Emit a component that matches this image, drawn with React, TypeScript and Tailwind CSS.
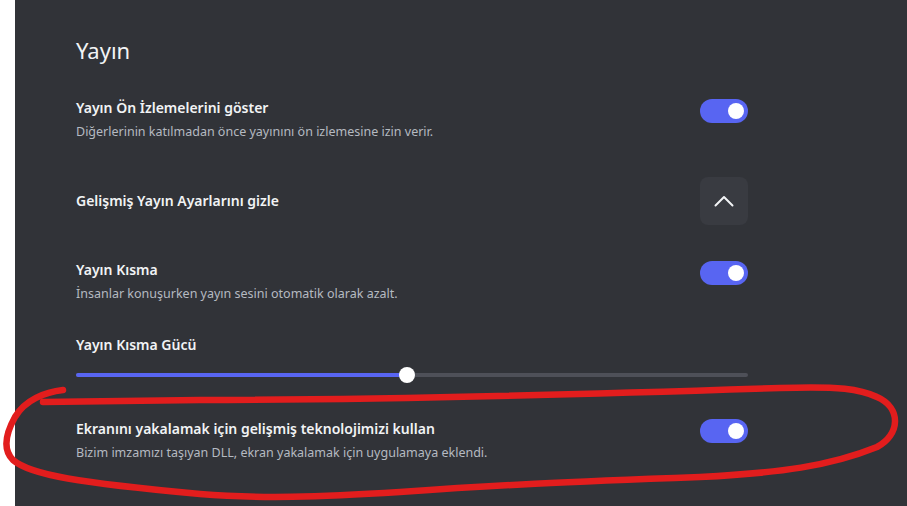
import React from "react";

function Toggle() {
  return (
    <div className="w-[48px] h-[24px] rounded-full bg-[#5865f2] flex items-center justify-end pr-[4px] shrink-0">
      <div className="w-[16px] h-[16px] rounded-full bg-white" />
    </div>
  );
}

export default function App() {
  const font = { fontFamily: '"Noto Sans", sans-serif' };
  return (
    <div className="w-[907px] h-[506px] flex bg-white relative overflow-hidden" style={font}>
      <div className="w-[15px] shrink-0 bg-white" />
      <div className="flex-1 bg-[#313338] pl-[61px] pr-[159px] pt-[36px]">
        <div className="text-[22px] leading-[28px] text-[#f2f3f5]">Yayın</div>

        <div className="mt-[34px] flex justify-between items-start">
          <div>
            <div className="text-[14px] leading-[20px] font-semibold text-[#f2f3f5]">Yayın Ön İzlemelerini göster</div>
            <div className="mt-[6px] text-[12.5px] leading-[16px] text-[#b5bac1]">Diğerlerinin katılmadan önce yayınını ön izlemesine izin verir.</div>
          </div>
          <div className="mt-[1px]"><Toggle /></div>
        </div>

        <div className="mt-[37px] flex justify-between items-center h-[48px]">
          <div className="text-[14px] leading-[20px] font-semibold text-[#f2f3f5]">Gelişmiş Yayın Ayarlarını gizle</div>
          <div className="w-[48px] h-[48px] rounded-[8px] bg-[#393b41] flex items-center justify-center">
            <svg width="20" height="12" viewBox="0 0 20 12" fill="none">
              <path d="M1.5 10.5 L10 2 L18.5 10.5" stroke="#f2f3f5" strokeWidth="2" strokeLinecap="round" strokeLinejoin="round" />
            </svg>
          </div>
        </div>

        <div className="mt-[35px] flex justify-between items-start">
          <div>
            <div className="text-[14px] leading-[20px] font-semibold text-[#f2f3f5]">Yayın Kısma</div>
            <div className="mt-[6px] text-[12.5px] leading-[16px] text-[#b5bac1]">İnsanlar konuşurken yayın sesini otomatik olarak azalt.</div>
          </div>
          <div className="mt-[1px]"><Toggle /></div>
        </div>

        <div className="mt-[33px] text-[14px] leading-[20px] font-semibold text-[#f2f3f5]">Yayın Kısma Gücü</div>
        <div className="mt-[12px] relative h-[16px] flex items-center">
          <div className="w-full h-[4px] rounded-full bg-[#4e5058] flex">
            <div className="w-[331px] h-[4px] rounded-full bg-[#5865f2]" />
          </div>
          <div className="absolute left-[323px] top-0 w-[16px] h-[16px] rounded-full bg-white" />
        </div>

        <div className="mt-[36px] flex justify-between items-start">
          <div>
            <div className="text-[14px] leading-[20px] font-semibold text-[#f2f3f5]">Ekranını yakalamak için gelişmiş teknolojimizi kullan</div>
            <div className="mt-[6px] text-[12.5px] leading-[16px] text-[#b5bac1]">Bizim imzamızı taşıyan DLL, ekran yakalamak için uygulamaya eklendi.</div>
          </div>
          <div className="mt-[0px]"><Toggle /></div>
        </div>
      </div>

      <svg className="absolute inset-0 pointer-events-none" width="907" height="506" viewBox="0 0 907 506" fill="none">
        <path
          d="M63 390 C45 392, 25 400, 15 417 C5 435, 3 450, 13 460 C30 475, 80 483, 200 494 C260 499, 320 497, 400 492 C500 485, 560 482, 700 477 C780 473, 830 466, 877 447 C900 435, 902 408, 877 397 C860 389, 840 386, 780 388 C600 394, 400 400, 200 400 C120 401, 60 402, 43 402"
          stroke="#e21d1d"
          strokeWidth="6.5"
          strokeLinecap="round"
          strokeLinejoin="round"
        />
      </svg>
    </div>
  );
}
